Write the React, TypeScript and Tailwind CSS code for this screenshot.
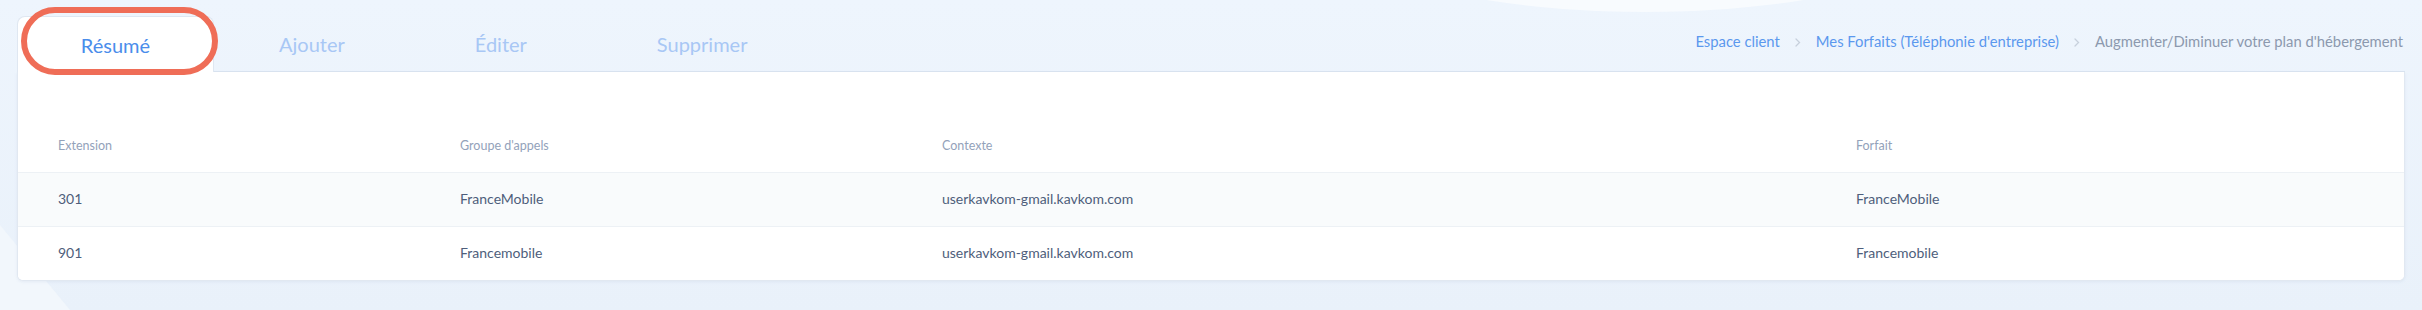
const tabs = ["Résumé", "Ajouter", "Éditer", "Supprimer"];

const rows = [
  { ext: "301", group: "FranceMobile", context: "userkavkom-gmail.kavkom.com", plan: "FranceMobile" },
  { ext: "901", group: "Francemobile", context: "userkavkom-gmail.kavkom.com", plan: "Francemobile" },
];

function Chevron() {
  return (
    <svg width="6" height="9" viewBox="0 0 6 9" className="mx-[15px] mt-px">
      <path d="M1 1l3.5 3.5L1 8" fill="none" stroke="#c7d0dc" strokeWidth="1.3" strokeLinecap="round" />
    </svg>
  );
}

function Backdrop() {
  return (
    <svg className="pointer-events-none absolute inset-0" width="2422" height="310" viewBox="0 0 2422 310">
      <defs>
        <linearGradient id="bg" x1="0" y1="0" x2="0" y2="1">
          <stop offset="0" stopColor="#eef5fd" />
          <stop offset="1" stopColor="#e9f1fa" />
        </linearGradient>
      </defs>
      <rect width="2422" height="310" fill="url(#bg)" />
      <ellipse cx="1645" cy="-150" rx="420" ry="162" fill="#f8fbfe" />
      <path d="M0 225 L70 310 L0 310 Z" fill="#f2f7fc" />
    </svg>
  );
}

export default function App() {
  return (
    <div className="relative h-[310px] w-full overflow-hidden font-['Lato',sans-serif]">
      <Backdrop />
      <div className="relative px-[17px] pt-[16px]">
        <div className="flex h-[56px] items-stretch justify-between border-b border-[#dae4f0]">
          <div className="flex items-stretch">
            {tabs.map((t, i) =>
              i === 0 ? (
                <div
                  key={t}
                  className="relative -mb-px flex w-[197px] items-center justify-center rounded-t-lg border border-b-0 border-[#dfe7f1] bg-white text-[20px] text-[#4a8deb]"
                >
                  {t}
                  <span className="absolute left-[3px] top-[-10px] h-[68px] w-[197px] rounded-[34px] border-[6px] border-[#ef6d57]" />
                </div>
              ) : (
                <div key={t} className="flex items-center justify-center px-[65px] text-[20px] text-[#a8c7f5]">
                  {t}
                </div>
              )
            )}
          </div>
          <div className="flex items-center pb-[4px] pr-[2px] text-[14.8px]">
            <span className="text-[#5b98ee]">Espace client</span>
            <Chevron />
            <span className="text-[#5b98ee]">Mes Forfaits (Téléphonie d'entreprise)</span>
            <Chevron />
            <span className="text-[#8c99ae]">Augmenter/Diminuer votre plan d'hébergement</span>
          </div>
        </div>

        <div className="overflow-hidden rounded-b-md border border-t-0 border-[#e1e8f1] bg-white shadow-[0_1px_3px_rgba(150,170,200,0.15)]">
          <div className="grid h-[100px] grid-cols-[402px_482px_914px_1fr] items-end pb-[19px] pl-[40px] text-[12.5px] leading-[14px] text-[#93a2ba]">
            <div>Extension</div>
            <div>Groupe d'appels</div>
            <div>Contexte</div>
            <div>Forfait</div>
          </div>
          {rows.map((r, i) => (
            <div
              key={r.ext}
              className={`grid h-[54px] grid-cols-[402px_482px_914px_1fr] items-center border-t border-[#edf1f5] pb-[3px] pl-[40px] text-[14px] text-[#4e5e7b] ${
                i === 0 ? "bg-[#f9fbfc]" : "bg-white"
              }`}
            >
              <div>{r.ext}</div>
              <div>{r.group}</div>
              <div>{r.context}</div>
              <div>{r.plan}</div>
            </div>
          ))}
        </div>
      </div>
    </div>
  );
}
